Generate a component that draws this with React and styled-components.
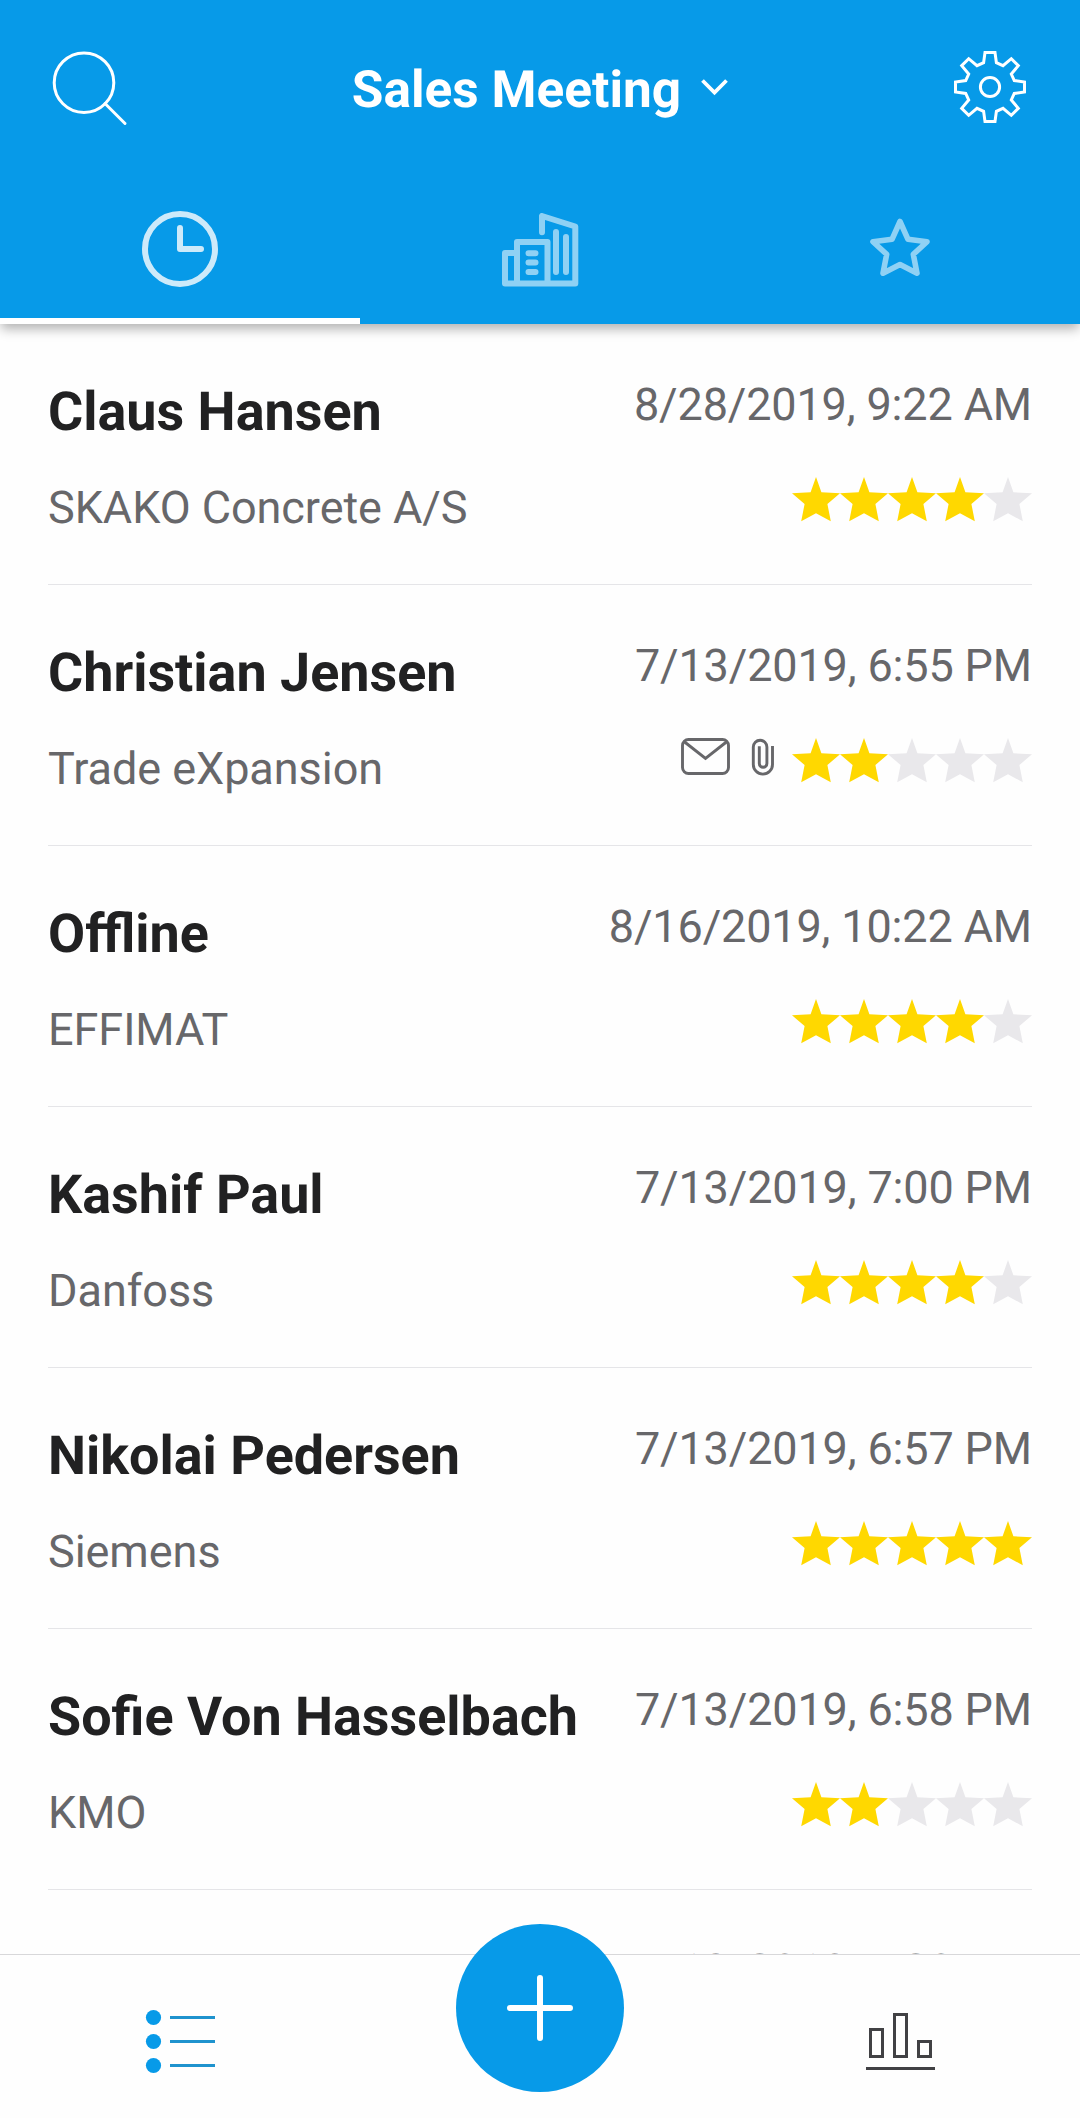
import React from "react";
import styled, { createGlobalStyle } from "styled-components";

const BLUE = "#079ae8";

const GlobalStyle = createGlobalStyle`
  * { box-sizing: border-box; }
  html, body { margin: 0; padding: 0; background: #fefefe; }
  body { font-family: Roboto, "Noto Sans", sans-serif; text-rendering: geometricPrecision; overflow: hidden; }
  svg { display: block; flex: none; overflow: visible; }
  button { border: 0; padding: 0; margin: 0; background: none; font: inherit; color: inherit; cursor: pointer; text-rendering: inherit; }
`;

const Screen = styled.div`
  width: 1080px;
  height: 2118px;
  display: flex;
  flex-direction: column;
  overflow: hidden;
  background: #fefefe;
`;

const Header = styled.header`
  position: relative;
  z-index: 1;
  flex: none;
  height: 324px;
  display: flex;
  flex-direction: column;
  background: ${BLUE};
  color: #fff;
  box-shadow: 0 6px 11px -1px rgba(0, 0, 0, 0.3);
`;

const TopBar = styled.div`
  height: 174px;
  padding: 0 51px;
  display: grid;
  grid-template-columns: 1fr auto 1fr;
  align-items: center;
`;

const BarButton = styled.button`
  justify-self: ${(p) => p.$side};
`;

const TitleButton = styled.button`
  display: flex;
  align-items: center;
  gap: 20px;
`;

const Title = styled.span`
  font-size: 51.4px;
  line-height: 62px;
  font-weight: 700;
  white-space: nowrap;
  padding-top: 5px;
`;

const Tabs = styled.nav`
  flex: 1;
  display: grid;
  grid-template-columns: repeat(3, 1fr);
`;

const Tab = styled.button`
  display: flex;
  align-items: center;
  justify-content: center;
  border-top: 6px solid transparent;
  border-bottom: 6px solid ${(p) => (p.$active ? "#fff" : "transparent")};

  svg { opacity: ${(p) => (p.$active ? 0.8 : 0.55)}; }
`;

const List = styled.main`
  flex: 1;
  min-height: 0;
  overflow: hidden;
  padding: 0 48px;
`;

const Row = styled.article`
  height: 261px;
  display: flex;
  justify-content: space-between;
  border-bottom: 1px solid #e5e5e8;
`;

const Person = styled.div`
  padding-top: 57px;
  white-space: nowrap;
`;

const Name = styled.h2`
  margin: 0;
  font-size: 53.9px;
  line-height: 64px;
  font-weight: 700;
  color: #212122;
`;

const Company = styled.p`
  margin: 36px 0 0;
  font-size: 45px;
  line-height: 54px;
  letter-spacing: -0.05px;
  color: #67676a;
`;

const Meta = styled.div`
  padding-top: 54px;
  display: flex;
  flex-direction: column;
  align-items: flex-end;
  white-space: nowrap;
`;

const When = styled.time`
  font-size: 45px;
  line-height: 54px;
  letter-spacing: -0.15px;
  color: #67676a;
`;

const Marks = styled.div`
  margin-top: 45px;
  display: flex;
  align-items: flex-start;
`;

const Stars = styled.div`
  display: flex;
`;

const Attachments = styled.div`
  display: flex;
  gap: 22px;
  margin-right: 18.5px;
  color: #67676a;
`;

const BottomBar = styled.footer`
  position: relative;
  flex: none;
  height: 164px;
  display: grid;
  grid-template-columns: repeat(3, 1fr);
  justify-items: center;
  background: #fefefe;
  border-top: 1px solid #d8d8da;
`;

const NavItem = styled.button`
  align-self: start;
  margin-top: ${(p) => p.$top}px;
`;

const AddButton = styled.button`
  width: 168px;
  height: 168px;
  margin-top: -31px;
  border-radius: 50%;
  background: ${BLUE};
  display: flex;
  align-items: center;
  justify-content: center;
`;

const SearchIcon = () => (
  <svg width="78" height="76" viewBox="51 49 78 76" fill="none" stroke="#fff" strokeWidth="3">
    <circle cx="84" cy="82.7" r="29.8" />
    <path d="M105 103.5 125 123.5" strokeLinecap="round" />
  </svg>
);

const EIGHTH = [[-5, -34.5], [5, -34.5], [6.4, -24.3], [13, -21.3]];
const gearPoints = [0, 90, 180, 270]
  .flatMap((deg) => {
    const a = (deg * Math.PI) / 180;
    return [...EIGHTH, [21.3, -28.3], [28.3, -21.3], [21.3, -13], [24.3, -6.4]].map(([x, y]) =>
      [x * Math.cos(a) - y * Math.sin(a), x * Math.sin(a) + y * Math.cos(a)].map((n) => n.toFixed(2)).join(",")
    );
  })
  .join(" ");

const GearIcon = () => (
  <svg width="78" height="78" viewBox="-39 -39 78 78" fill="none" stroke="#fff" strokeWidth="3">
    <polygon points={gearPoints} />
    <circle r="9.6" />
  </svg>
);

const ChevronIcon = () => (
  <svg width="27" height="16" viewBox="0 0 27 16" fill="none" stroke="#fff" strokeWidth="3.8">
    <path d="M1.5 1.5 13.5 13.5 25.5 1.5" />
  </svg>
);

const ClockIcon = () => (
  <svg width="76" height="76" viewBox="-38 -38 76 76" fill="none" stroke="#fff" strokeWidth="6">
    <circle r="35" />
    <path d="M0-21V0H21" strokeLinecap="round" strokeLinejoin="round" />
  </svg>
);

const BuildingIcon = () => (
  <svg width="76" height="74" viewBox="22 22 76 74" fill="none" stroke="#fff" strokeWidth="6" strokeLinecap="round" strokeLinejoin="round">
    <path d="M36 63H25V93.5H95.3V36.5L62 26V42.3M37 93V52H67.5V93" />
    <path d="M48.5 63.2H55.5M48.5 72.6H55.5M48.5 82H55.5M76 42V82M86 47V82" />
  </svg>
);

const StarTabIcon = () => (
  <svg width="60" height="58" viewBox="-30 -29 60 58" fill="none" stroke="#fff" strokeWidth="5.6" strokeLinejoin="round">
    <path d="M0-27.5 8-9.7 27-7.3 13.3 5.3 17 24.2 0 15.6-17 24.2-13.3 5.3-27-7.3-8-9.7Z" />
  </svg>
);

const RatingStar = ({ filled }) => (
  <svg width="48" height="45" viewBox="0 0 48 45" fill={filled ? "#ffd800" : "#e9e8eb"}>
    <path d="M24 0 29.4 15.3 48 16.3 35.4 27 38.8 44.2 24 36.3 9.2 44.2 12.6 27 0 16.3 18.6 15.3Z" />
  </svg>
);

const MailIcon = () => (
  <svg width="49" height="37" viewBox="0 0 49 37" fill="none" stroke="currentColor" strokeWidth="2.9">
    <rect x="1.5" y="1.5" width="46" height="34" rx="6" />
    <path d="M3 3.5 24.5 20.5 46 3.5" />
  </svg>
);

const ClipIcon = () => (
  <svg width="22" height="38" viewBox="0 0 22 38" fill="none" stroke="currentColor" strokeWidth="2.9">
    <path d="M20.5 8V26.5A9.6 9.6 0 0 1 1.3 26.5V9A6.8 6.8 0 0 1 14.9 9V25.5A3.8 3.8 0 0 1 7.3 25.5V8.2" />
  </svg>
);

const ListIcon = () => (
  <svg width="69" height="63" viewBox="0 0 69 63">
    {[7.5, 31.5, 55.5].map((y) => (
      <g key={y}>
        <circle cx="7.5" cy={y} r="7.6" fill={BLUE} />
        <rect x="24" y={y - 1.5} width="45" height="3" fill="#1f93ce" />
      </g>
    ))}
  </svg>
);

const PlusIcon = () => (
  <svg width="66" height="66" viewBox="-33 -33 66 66" stroke="#fff" strokeWidth="6" strokeLinecap="round">
    <path d="M0-30V30M-30 0H30" />
  </svg>
);

const ChartIcon = () => (
  <svg width="69" height="57" viewBox="0 0 69 57" fill="none" stroke="#414144" strokeWidth="3">
    <rect x="4.5" y="16.5" width="12" height="27" />
    <rect x="28.5" y="1.5" width="12" height="42" />
    <rect x="52.5" y="28.5" width="12" height="15" />
    <path d="M0 55.5H69" />
  </svg>
);

const LEADS = [
  { name: "Claus Hansen", company: "SKAKO Concrete A/S", when: "8/28/2019, 9:22 AM", rating: 4 },
  { name: "Christian Jensen", company: "Trade eXpansion", when: "7/13/2019, 6:55 PM", rating: 2, attached: true },
  { name: "Offline", company: "EFFIMAT", when: "8/16/2019, 10:22 AM", rating: 4 },
  { name: "Kashif Paul", company: "Danfoss", when: "7/13/2019, 7:00 PM", rating: 4 },
  { name: "Nikolai Pedersen", company: "Siemens", when: "7/13/2019, 6:57 PM", rating: 5 },
  { name: "Sofie Von Hasselbach", company: "KMO", when: "7/13/2019, 6:58 PM", rating: 2 },
  { name: "", company: "", when: "7/13/2019, 7:20 PM", rating: 0 },
];

const Lead = ({ name, company, when, rating, attached }) => (
  <Row>
    <Person>
      <Name>{name}</Name>
      <Company>{company}</Company>
    </Person>
    <Meta>
      <When>{when}</When>
      <Marks>
        {attached && (
          <Attachments>
            <MailIcon />
            <ClipIcon />
          </Attachments>
        )}
        <Stars>
          {[1, 2, 3, 4, 5].map((n) => (
            <RatingStar key={n} filled={n <= rating} />
          ))}
        </Stars>
      </Marks>
    </Meta>
  </Row>
);

export default function App() {
  return (
    <Screen>
      <GlobalStyle />
      <Header>
        <TopBar>
          <BarButton $side="start" aria-label="Search"><SearchIcon /></BarButton>
          <TitleButton>
            <Title>Sales Meeting</Title>
            <ChevronIcon />
          </TitleButton>
          <BarButton $side="end" aria-label="Settings"><GearIcon /></BarButton>
        </TopBar>
        <Tabs>
          <Tab $active aria-label="Recent"><ClockIcon /></Tab>
          <Tab aria-label="Companies"><BuildingIcon /></Tab>
          <Tab aria-label="Favourites"><StarTabIcon /></Tab>
        </Tabs>
      </Header>
      <List>
        {LEADS.map((lead, i) => (
          <Lead key={i} {...lead} />
        ))}
      </List>
      <BottomBar>
        <NavItem $top={55} aria-label="List"><ListIcon /></NavItem>
        <AddButton aria-label="Add"><PlusIcon /></AddButton>
        <NavItem $top={58} aria-label="Statistics"><ChartIcon /></NavItem>
      </BottomBar>
    </Screen>
  );
}
